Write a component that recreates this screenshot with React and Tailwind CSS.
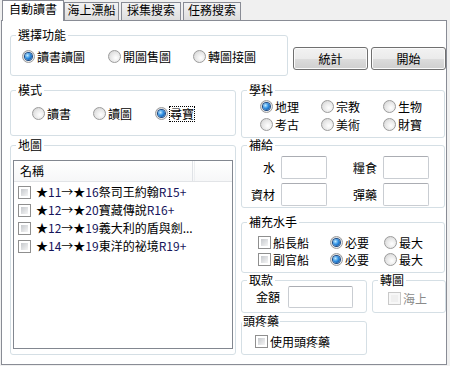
import React from 'react';

const font = "font-['Noto_Sans_CJK_TC','Noto_Sans_CJK_JP',sans-serif]";

function Group({ title, className = '', legendClass = 'left-[5px] px-[2px]', children }) {
  return (
    <div className={`relative rounded-[3px] border border-[#d5dfe5] ${className}`}>
      <span className={`absolute top-[-8px] bg-white leading-[14px] ${legendClass}`}>{title}</span>
      {children}
    </div>
  );
}

function Radio({ checked, label, className = '', focus }) {
  return (
    <div className={`flex h-[13px] items-center ${className}`}>
      <span className="flex h-[13px] w-[13px] shrink-0 items-center justify-center rounded-full border border-[#9c9c9c] bg-[radial-gradient(circle_at_62%_62%,#ffffff_0%,#e6e6e6_55%,#cbcbcb_100%)]">
        {checked && (
          <span className="h-[7px] w-[7px] rounded-full bg-[radial-gradient(circle_at_35%_35%,#c2ecff_0%,#2f8fe3_45%,#0a3c7e_100%)] shadow-[0_0_0_1px_#1b4a85]" />
        )}
      </span>
      <span className={`ml-[2px] leading-[14px] ${focus ? 'outline-1 outline-dotted outline-black' : ''}`}>{label}</span>
    </div>
  );
}

function Check({ disabled }) {
  return (
    <span
      className={`flex h-[13px] w-[13px] shrink-0 border p-[2px] ${
        disabled ? 'border-[#c9c9c9] bg-[#f7f7f7]' : 'border-[#8f8f8f] bg-white'
      }`}
    >
      <span className={`flex-1 ${disabled ? 'bg-[#efefef]' : 'bg-linear-to-br from-[#c6c9cd] to-[#f5f5f5]'}`} />
    </span>
  );
}

function CheckItem({ label, disabled, className = '' }) {
  return (
    <div className={`flex h-[13px] items-center ${className}`}>
      <Check disabled={disabled} />
      <span className={`ml-[2px] leading-[14px] ${disabled ? 'text-[#8a8a8a]' : ''}`}>{label}</span>
    </div>
  );
}

function Button({ children, className = '' }) {
  return (
    <div
      className={`flex h-[23px] w-[75px] items-center justify-center rounded-[3px] border border-[#707070] bg-[linear-gradient(#f2f2f2,#ebebeb_50%,#dddddd_50%,#cfcfcf)] shadow-[inset_0_0_0_1px_#fbfbfb] ${className}`}
    >
      {children}
    </div>
  );
}

function Input({ className = '' }) {
  return <div className={`rounded-[2px] border border-[#c9cdd2] border-t-[#abadb3] bg-white ${className}`} />;
}

function Tab({ children, className = '' }) {
  return (
    <div
      className={`mt-[2px] flex h-[18px] justify-center border border-b-0 border-[#898c95] bg-linear-to-b from-[#f3f3f3] to-[#dedede] ${className}`}
    >
      {children}
    </div>
  );
}

const maps = [
  ['★', '11', '→★', '16', '祭司王約翰', 'R15+'],
  ['★', '12', '→★', '20', '寶藏傳說', 'R16+'],
  ['★', '12', '→★', '19', '義大利的盾與劍...', ''],
  ['★', '14', '→★', '19', '東洋的祕境', 'R19+'],
];

export default function App() {
  return (
    <div className={`h-[366px] w-[450px] overflow-hidden bg-[#f0f0f0] text-[12px] leading-[14px] text-black ${font}`}>
      {/* tabs */}
      <div className="flex h-[20px] pl-[2px]">
        <div className="relative z-10 flex h-[21px] w-[62px] justify-center border border-b-0 border-[#898c95] bg-white pt-[1px]">
          自動讀書
        </div>
        <Tab className="w-[55px]">海上漂船</Tab>
        <Tab className="ml-[2px] w-[60px]">採集搜索</Tab>
        <Tab className="ml-[2px] w-[58px]">任務搜索</Tab>
      </div>

      {/* page */}
      <div className="ml-[1px] h-[345px] w-[446px] border border-[#898c95] bg-white pl-[8px] pt-[14px]">
        <div className="flex items-start">
          <Group title="選擇功能" className="h-[41px] w-[278px]">
            <div className="ml-[11px] mt-[14px] flex items-center">
              <Radio checked label="讀書讀圖" className="w-[86px]" />
              <Radio label="開圖售圖" className="w-[85px]" />
              <Radio label="轉圖接圖" />
            </div>
          </Group>
          <Button className="ml-[5px] mt-[12px]">統計</Button>
          <Button className="ml-[3px] mt-[12px]">開始</Button>
        </div>

        <div className="mt-[14px] flex items-start">
          {/* left column */}
          <div className="w-[226px]">
            <Group title="模式" className="h-[46px]">
              <div className="ml-[21px] mt-[16px] flex items-center">
                <Radio label="讀書" className="w-[61px]" />
                <Radio label="讀圖" className="w-[62px]" />
                <Radio checked focus label="尋寶" />
              </div>
            </Group>

            <Group title="地圖" className="mt-[9px] h-[210px]">
              <div className="ml-[2px] mt-[14px] h-[189px] w-[220px] border border-[#828790] bg-white">
                <div className="flex h-[21px] border-b border-[#e2e4e7] bg-linear-to-b from-white to-[#f6f7f8]">
                  <div className="flex w-[179px] items-center border-r border-[#dfe2e6] pl-[6px]">名稱</div>
                  <div className="ml-[1px] w-[1px] bg-[#eceef0]" />
                </div>
                <div className="pt-[1px]">
                  {maps.map((m, i) => (
                    <div key={i} className="flex h-[18px] items-center pl-[4px]">
                      <Check />
                      <span className="ml-[5px] whitespace-nowrap leading-[14px]">
                        {m[0]}
                        <span className="text-[#14145a]">{m[1]}</span>
                        {m[2]}
                        <span className="text-[#14145a]">{m[3]}</span>
                        {m[4]}
                        <span className="text-[#14145a]">{m[5]}</span>
                      </span>
                    </div>
                  ))}
                </div>
              </div>
            </Group>
          </div>

          {/* right column */}
          <div className="ml-[5px] w-[204px]">
            <Group title="學科" className="h-[48px]">
              <div className="ml-[18px] mt-[9px] grid grid-cols-[61px_62px_auto] gap-y-[5px]">
                <Radio checked label="地理" />
                <Radio label="宗教" />
                <Radio label="生物" />
                <Radio label="考古" />
                <Radio label="美術" />
                <Radio label="財寶" />
              </div>
            </Group>

            <Group title="補給" className="mt-[7px] h-[63px]">
              <div className="mt-[10px] flex flex-col gap-[4px]">
                <div className="flex items-center">
                  <span className="w-[33px] text-right">水</span>
                  <Input className="ml-[6px] h-[23px] w-[46px]" />
                  <span className="w-[50px] text-right">糧食</span>
                  <Input className="ml-[6px] h-[23px] w-[46px]" />
                </div>
                <div className="flex items-center">
                  <span className="w-[33px] text-right">資材</span>
                  <Input className="ml-[6px] h-[23px] w-[46px]" />
                  <span className="w-[50px] text-right">彈藥</span>
                  <Input className="ml-[6px] h-[23px] w-[46px]" />
                </div>
              </div>
            </Group>

            <Group title="補充水手" className="mt-[14px] h-[51px]">
              <div className="mt-[13px] flex flex-col gap-[4px]">
                <div className="flex items-center">
                  <CheckItem label="船長船" className="ml-[16px] w-[72px]" />
                  <Radio checked label="必要" className="w-[54px]" />
                  <Radio label="最大" />
                </div>
                <div className="flex items-center">
                  <CheckItem label="副官船" className="ml-[16px] w-[72px]" />
                  <Radio checked label="必要" className="w-[54px]" />
                  <Radio label="最大" />
                </div>
              </div>
            </Group>

            <div className="mt-[7px] flex items-start">
              <Group title="取款" className="h-[33px] w-[126px] shrink-0">
                <div className="ml-[14px] mt-[5px] flex items-center">
                  <span className="w-[24px]">金額</span>
                  <Input className="ml-[8px] h-[22px] w-[65px]" />
                </div>
              </Group>
              <Group title="轉圖" className="ml-[5px] h-[33px] w-[74px] shrink-0">
                <CheckItem disabled label="海上" className="ml-[15px] mt-[11px]" />
              </Group>
            </div>

            <Group title="頭疼藥" className="mt-[8px] h-[34px] w-[126px]" legendClass="left-0 px-[1px]">
              <CheckItem label="使用頭疼藥" className="ml-[13px] mt-[13px]" />
            </Group>
          </div>
        </div>
      </div>
    </div>
  );
}
